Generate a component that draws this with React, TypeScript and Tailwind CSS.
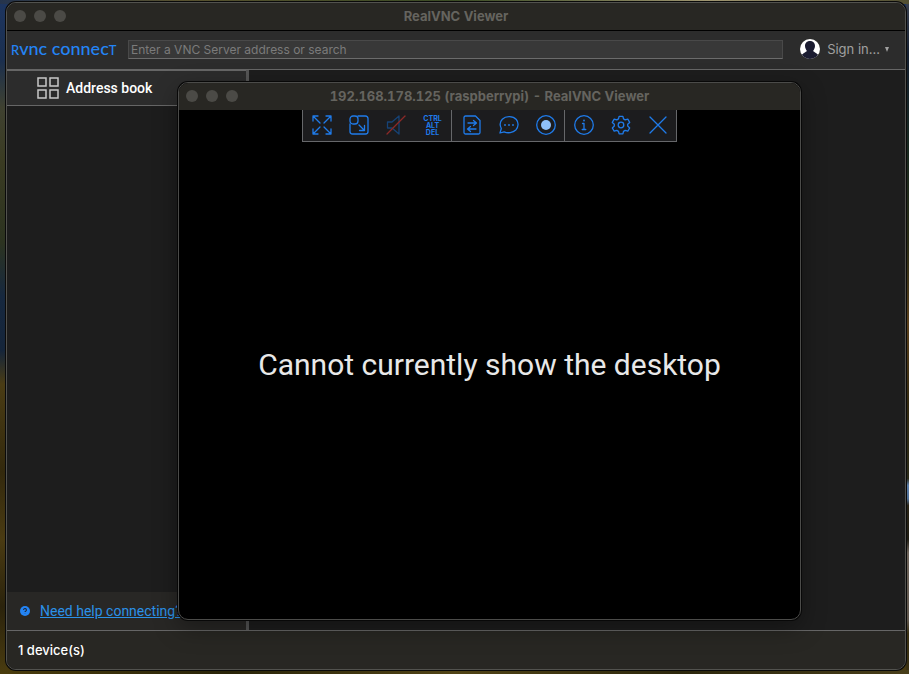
import type { ReactNode } from "react";

function WindowTitle({ children }: { children: ReactNode }) {
  return (
    <div className="relative flex h-[27px] shrink-0 items-center justify-center bg-[#282723] pb-0.5">
      <div className="absolute left-[7px] flex gap-2">
        <button aria-label="Close" className="size-3 rounded-full bg-[#4b4a46]" />
        <button aria-label="Minimise" className="size-3 rounded-full bg-[#4b4a46]" />
        <button aria-label="Zoom" className="size-3 rounded-full bg-[#4b4a46]" />
      </div>
      <h1 className="text-[13px] leading-4 font-bold text-[#65645f] tabular-nums">{children}</h1>
    </div>
  );
}

function Tool({ label, children }: { label: string; children: ReactNode }) {
  return (
    <button aria-label={label} title={label} className="flex h-full w-[37px] items-center justify-center">
      {children}
    </button>
  );
}

function Icon({ children }: { children: ReactNode }) {
  return (
    <svg
      viewBox="0 0 20 20"
      className="size-5 text-[#1f7bea]"
      fill="none"
      stroke="currentColor"
      strokeWidth="1.3"
      strokeLinecap="round"
      strokeLinejoin="round"
      aria-hidden="true"
    >
      {children}
    </svg>
  );
}

function Toolbar() {
  return (
    <div className="flex h-8 border border-t-0 border-[#66676a] bg-[#1c1c1e]" role="toolbar">
      <div className="flex border-r border-[#66676a] pb-px">
        <Tool label="Full screen">
          <Icon>
            <path d="M1 6V1h5M1 1l7 7M14 1h5v5M19 1l-7 7M1 14v5h5M1 19l7-7M19 14v5h-5M19 19l-7-7" />
          </Icon>
        </Tool>
        <Tool label="Scale window">
          <Icon>
            <path d="M9 1h7.5A2.5 2.5 0 0 1 19 3.500V16.500A2.500 2.500 0 0 1 16.500 19H3.500A2.500 2.500 0 0 1 1 16.500V9" />
            <rect x="1" y="1" width="8" height="8" rx="3" />
            <path d="M10 10l5.500 5.500M15.500 10.500v5h-5" />
          </Icon>
        </Tool>
        <Tool label="Mute audio">
          <Icon>
            <path d="M1.500 7v6h4.500l7 6V1L6 7z" stroke="#164275" />
            <path d="M1 19L19 1" stroke="#8b2928" />
          </Icon>
        </Tool>
        <Tool label="Send Ctrl Alt Del">
          <span className="w-5 text-center text-[7px] leading-[7px] font-bold text-[#1f7bea]">CTRL ALT DEL</span>
        </Tool>
      </div>
      <div className="flex border-r border-[#66676a] pb-px pl-px">
        <Tool label="Transfer files">
          <Icon>
            <path d="M3.500 1h10L18 5.500V17.500A1.500 1.500 0 0 1 16.500 19h-13A1.500 1.500 0 0 1 2 17.500v-15A1.500 1.500 0 0 1 3.500 1z" />
            <path d="M6 8h8M11.500 5.500L14.500 8l-3 2.500M14 14H6M8.500 11.500L5.500 14l3 2.500" />
          </Icon>
        </Tool>
        <Tool label="Chat">
          <Icon>
            <path d="M1 18l1.300-4.500C.5 10 .8 6.800 3.300 4.200 7 .5 14 .9 17.300 4.500c2.500 3 2.300 7.500-.5 10.500-2.900 2.900-8 3.500-11.700 1.800z" />
            <path d="M6 10h.01M10 10h.01M14 10h.01" strokeWidth="1.800" />
          </Icon>
        </Tool>
        <Tool label="Record session">
          <Icon>
            <circle cx="10" cy="10" r="9.300" />
            <circle cx="10" cy="10" r="5" fill="#8fc1fb" stroke="none" />
          </Icon>
        </Tool>
      </div>
      <div className="flex pb-px">
        <Tool label="Connection information">
          <Icon>
            <circle cx="10" cy="10" r="9.300" />
            <path d="M8.500 8.500H10v6M8.200 14.500h3.600" />
            <path d="M10 5.500h.01" strokeWidth="1.800" />
          </Icon>
        </Tool>
        <Tool label="Properties">
          <Icon>
            <path d="M8.100 1.300h3.800l.6 2.600 1.700 1 2.600-.8 1.900 3.300-2 1.800v1.900l2 1.800-1.900 3.300-2.600-.8-1.700 1-.6 2.500H8.100l-.6-2.500-1.700-1-2.600.8-1.900-3.300 2-1.800V9.200l-2-1.800 1.900-3.300 2.600.8 1.700-1z" />
            <circle cx="10" cy="10" r="2.800" />
          </Icon>
        </Tool>
        <Tool label="End session">
          <Icon>
            <path d="M2 2l16 16M18 2L2 18" />
          </Icon>
        </Tool>
      </div>
    </div>
  );
}

function SessionWindow() {
  return (
    <section className="absolute top-[82px] left-[178px] flex h-[538px] w-[623px] flex-col overflow-hidden rounded-[10px] border border-[#4b4b49] bg-black shadow-[0_0_0_1px_#080808,0_8px_24px_rgba(0,0,0,0.35)]">
      <WindowTitle>192.168.178.125 (raspberrypi) - RealVNC Viewer</WindowTitle>
      <div className="flex justify-center">
        <Toolbar />
      </div>
      <div className="flex grow items-center justify-center pb-8">
        <p className="font-['Roboto','Liberation_Sans',sans-serif] text-[30px] leading-9 whitespace-nowrap text-[#e8e8e8]">
          Cannot currently show the desktop
        </p>
      </div>
    </section>
  );
}

function Header() {
  return (
    <header className="flex h-10 shrink-0 items-center border-t border-b border-t-black border-b-[#666] bg-[#2c2c2c] pr-[15px] pb-0.5 pl-1">
      <div className="w-[117px] shrink-0 font-['Lato','Liberation_Sans',sans-serif] text-[18px] leading-5 font-medium whitespace-nowrap text-[#2484f5]">
        <span className="text-[13px]">R</span>vnc connec<span className="text-[13px]">T</span>
      </div>
      <input
        type="text"
        aria-label="VNC Server address"
        placeholder="Enter a VNC Server address or search"
        className="h-[19px] min-w-0 grow border border-[#494949] border-b-[#6b6b6b] bg-[#383838] px-0.5 text-[12px] text-white placeholder:text-[#7b7b7b]"
      />
      <button className="ml-[17px] flex shrink-0 items-center text-[13px] leading-4 text-[#a0a0a0]">
        <svg viewBox="0 0 20 20" className="mr-[7px] size-5" aria-hidden="true">
          <circle cx="10" cy="10" r="10" fill="#fff" />
          <path d="M10 2c3.300 0 5 2.200 5 5 0 2.400-1.200 3.600-1.800 4.800.1 1.200 2.500 1.400 4.900 4A10 10 0 0 1 1.900 15.800c2.400-2.600 4.800-2.800 4.900-4C6.200 10.600 5 9.400 5 7c0-2.800 1.700-5 5-5z" fill="#1b1c31" />
        </svg>
        Sign in...
        <svg viewBox="0 0 6 5" className="ml-1 h-[5px] w-1.5" aria-hidden="true">
          <path d="M1 0h4L3 5z" fill="#a0a0a0" />
        </svg>
      </button>
    </header>
  );
}

function ViewerWindow() {
  return (
    <section className="absolute top-0.5 right-[3px] bottom-1 left-1.5 flex flex-col overflow-hidden rounded-[10px] border border-[#52524e] bg-[#1d1d1d] shadow-[0_0_0_1px_#0a0a0a]">
      <WindowTitle>RealVNC Viewer</WindowTitle>
      <Header />
      <main className="flex min-h-0 grow">
        <aside className="flex w-[239px] shrink-0 flex-col">
          <button className="flex h-9 w-full items-center border-t border-b border-t-[#666] border-b-[#666] bg-[#2c2c2c] pl-[30px] font-['Roboto','Liberation_Sans',sans-serif] text-[14px] font-medium text-white">
            <svg viewBox="0 0 22 22" className="mr-[7px] size-[22px]" fill="none" stroke="#c7c7c7" strokeWidth="1.500" aria-hidden="true">
              <path d="M1 1h8v8H1zM13 1h8v8h-8zM1 13h8v8H1zM13 13h8v8h-8z" />
            </svg>
            Address book
          </button>
          <div className="grow" />
          <div className="flex h-[38px] items-center bg-[#282725] pb-px pl-[13px]">
            <svg viewBox="0 0 10 10" className="mr-[10px] size-[10px]" aria-hidden="true">
              <circle cx="5" cy="5" r="5" fill="#2384f5" />
              <path d="M3.600 4a1.400 1.400 0 1 1 2 1.200c-.5.200-.6.400-.6.800M5 7.500v.3" fill="none" stroke="#202634" strokeWidth="1.100" />
            </svg>
            <a href="#help" className="font-['Roboto','Liberation_Sans',sans-serif] text-[14px] leading-4 text-[#2b91e8] underline">
              Need help connecting?
            </a>
          </div>
        </aside>
        <div className="w-[3px] shrink-0 bg-[#555]" />
      </main>
      <footer className="flex h-[39px] shrink-0 items-center border-t border-[#666] bg-[#282723] pt-px pl-[11px] text-[13px] font-medium text-white">
        1 device(s)
      </footer>
    </section>
  );
}

export default function App() {
  return (
    <div className="relative h-screen w-full overflow-hidden bg-[linear-gradient(180deg,#1d3560_0%,#1b2f4e_9%,#3f4130_16%,#3a3b22_24%,#2c3320_36%,#16283f_44%,#15253a_52%,#4a3c14_57%,#33290d_70%,#4a3b12_80%,#2b230c_90%,#4a3c10_100%)] font-['Inter','Liberation_Sans',sans-serif]">
      <div className="absolute inset-y-0 right-0 w-[3px] bg-[linear-gradient(180deg,#3b4250_0%,#141f30_8%,#18281f_22%,#2a2b14_36%,#5a3f1a_48%,#33290f_60%,#2b2a18_71%,#5a7ca8_72%,#4f6f97_74%,#2a2415_75%,#1f1c12_80%,#6d6359_82%,#5d544a_92%,#3a3012_94%)]" />
      <div className="absolute inset-x-0 top-0 h-1 bg-[linear-gradient(90deg,#25344d,#59522f_20%,#3b4c25_50%,#a09671_78%,#514e30)]" />
      <div className="absolute inset-x-0 bottom-0 h-1 bg-[linear-gradient(90deg,#4a3c0c,#292408_25%,#514416_50%,#2c270c_75%,#483e19)]" />
      <ViewerWindow />
      <SessionWindow />
    </div>
  );
}
